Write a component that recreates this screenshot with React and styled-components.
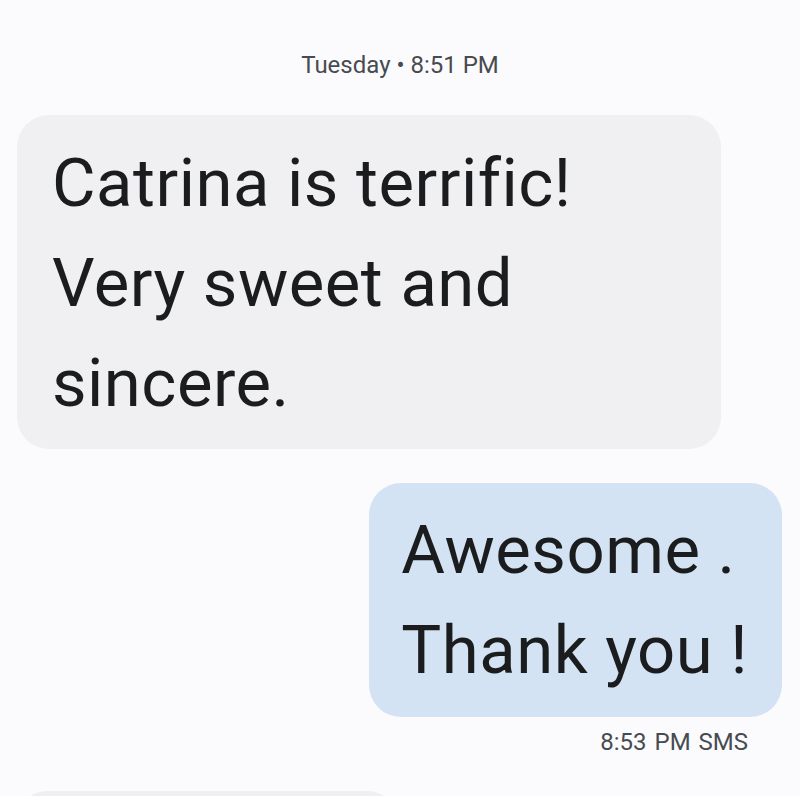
import React from 'react';
import styled, { createGlobalStyle } from 'styled-components';

const GlobalStyle = createGlobalStyle`
  html, body {
    margin: 0;
    padding: 0;
    background: #fbfbfd;
  }
  body {
    font-family: Roboto, "Noto Sans", sans-serif;
    overflow: hidden;
  }
`;

const Thread = styled.div`
  width: 800px;
  height: 796px;
  overflow: hidden;
  background: #fbfbfd;
  display: flex;
  flex-direction: column;
  padding-top: 49px;
  box-sizing: border-box;
`;

const Stamp = styled.div`
  text-align: center;
  font-size: 24px;
  color: #474b50;
  line-height: 32px;
  margin-bottom: 34px;
`;

const Row = styled.div`
  display: flex;
  flex-shrink: 0;
  justify-content: ${(p) => (p.$out ? 'flex-end' : 'flex-start')};
  padding: ${(p) => (p.$out ? '0 18px 0 0' : '0 0 0 17px')};
`;

const Bubble = styled.div`
  box-sizing: border-box;
  max-width: 704px;
  padding: ${(p) => (p.$out ? '17px 34px 17px 32px' : '18px 34px 16px 35px')};
  border-radius: 32px;
  background: ${(p) => (p.$out ? '#d3e3f3' : '#f0f0f3')};
  color: #1b1c1e;
  font-size: 67px;
  line-height: 100px;
  letter-spacing: 0.5px;
  white-space: pre-line;
`;

const Stub = styled.div`
  width: 380px;
  height: 60px;
  border-radius: 32px;
  background: #efeff2;
`;

const Meta = styled.div`
  text-align: right;
  padding-right: 52px;
  margin-top: 10px;
  font-size: 24px;
  line-height: 30px;
  color: #474b50;
  word-spacing: 2px;
`;

const Gap = styled.div`
  height: ${(p) => p.$h}px;
  flex-shrink: 0;
`;

export default function App() {
  return (
    <>
      <GlobalStyle />
      <Thread>
        <Stamp>Tuesday • 8:51 PM</Stamp>
        <Row>
          <Bubble>Catrina is terrific! Very sweet and sincere.</Bubble>
        </Row>
        <Gap $h={34} />
        <Row $out>
          <Bubble $out>{'Awesome .\nThank you !'}</Bubble>
        </Row>
        <Meta>8:53 PM SMS</Meta>
        <Gap $h={34} />
        <Row>
          <Stub />
        </Row>
      </Thread>
    </>
  );
}
